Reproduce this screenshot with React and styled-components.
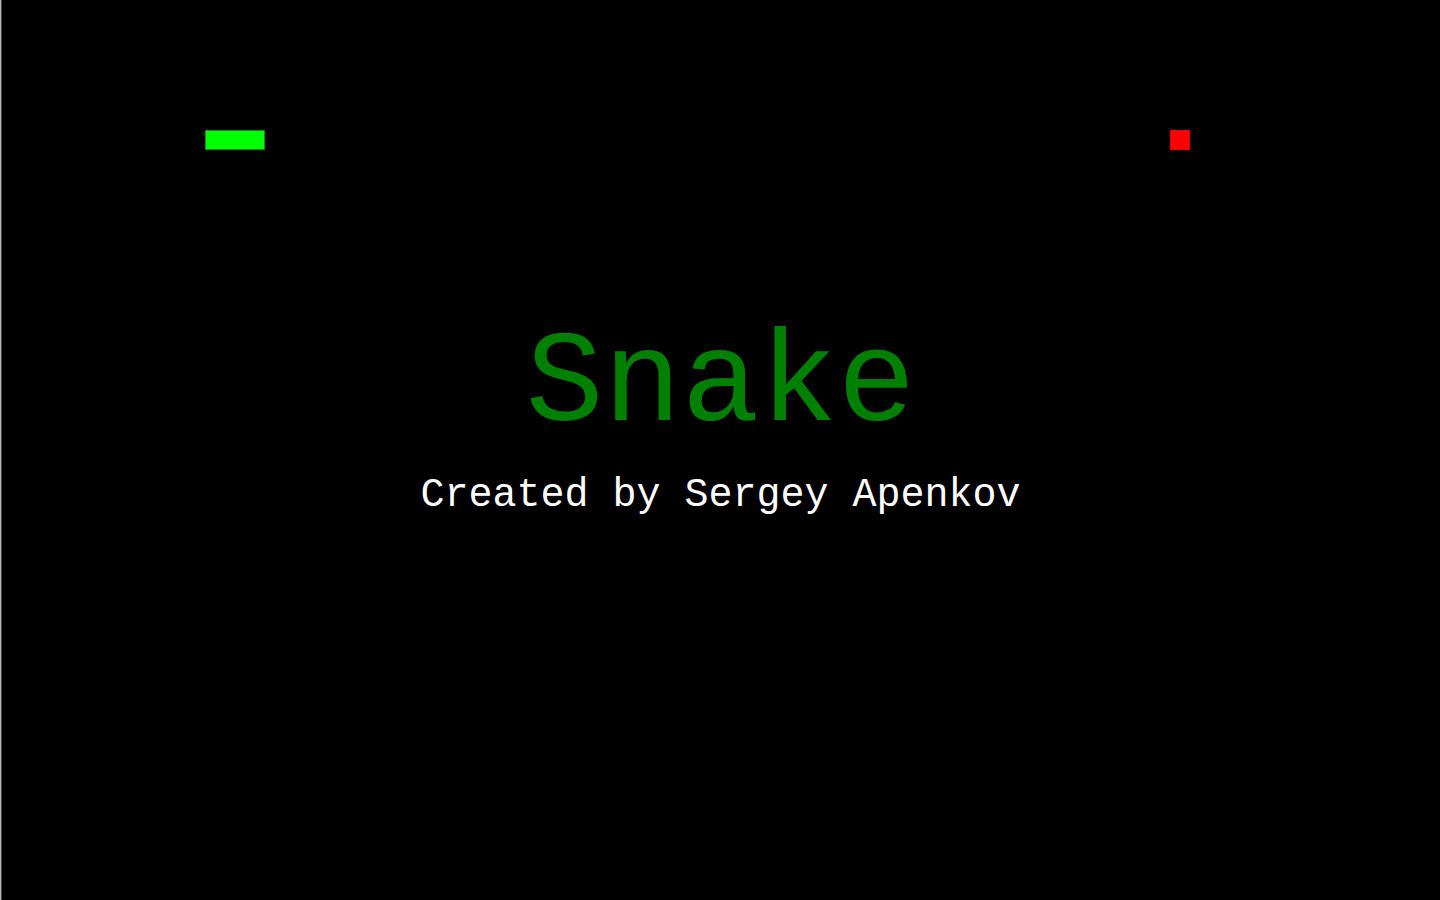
import React from "react";
import styled, { createGlobalStyle } from "styled-components";

const GlobalStyle = createGlobalStyle`
  html, body {
    margin: 0;
    padding: 0;
    background: #000;
    overflow: hidden;
  }
  #root {
    height: 100vh;
  }
`;

const Screen = styled.main`
  position: relative;
  box-sizing: border-box;
  height: 100vh;
  width: 100vw;
  background: #000;
  border-left: 1px solid #b8b8b8;
  box-shadow: inset 1px 0 0 #4a4a4a;
  display: flex;
  flex-direction: column;
  align-items: center;
  padding-top: 321px;
  font-family: "Courier New", Courier, "Liberation Mono", monospace;
`;

const Cell = styled.div`
  position: absolute;
  box-sizing: border-box;
  left: ${(p) => p.$x}px;
  top: ${(p) => p.$y}px;
  width: ${(p) => p.$w}px;
  height: 20px;
  background: ${(p) => p.$fill};
  border: 1px solid ${(p) => p.$edge};
`;

const Title = styled.h1`
  margin: 0;
  font-family: inherit;
  font-weight: normal;
  font-size: 130px;
  line-height: 1;
  color: #008000;
`;

const Credit = styled.p`
  margin: 25px 0 0;
  font-family: inherit;
  font-size: 40px;
  line-height: 1;
  color: #fff;
`;

export default function App() {
  return (
    <>
      <GlobalStyle />
      <Screen>
        <Cell $x={204} $y={130} $w={60} $fill="#00ff00" $edge="#0b8f0b" />
        <Cell $x={1169} $y={130} $w={20} $fill="#ff0000" $edge="#e00000" />
        <Title>Snake</Title>
        <Credit>Created by Sergey Apenkov</Credit>
      </Screen>
    </>
  );
}
